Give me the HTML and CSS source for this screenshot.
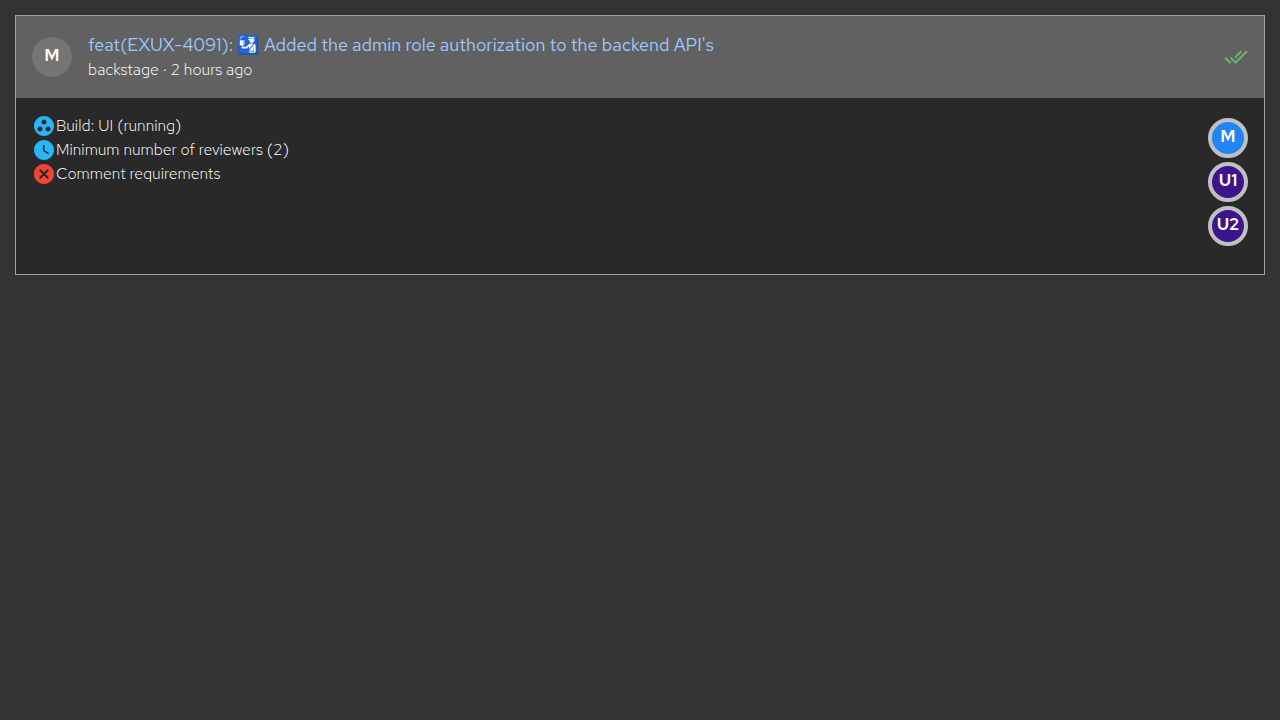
FILE: index.html
```html
<!DOCTYPE html>
<html lang="en">
<head>
<meta charset="utf-8">
<title>Pull request</title>
<link rel="stylesheet" href="styles.css">
</head>
<body>
<article class="card">
  <header class="card-header">
    <div class="avatar">M</div>
    <div class="heading">
      <h1 class="title"><a class="title-link" href="#">feat(EXUX-4091): 🛂 Added the admin role authorization to the backend API's</a></h1>
      <p class="subtitle">backstage · 2 hours ago</p>
    </div>
    <svg class="icon approved" viewBox="0 0 24 24" role="img" aria-label="Approved"><path d="M18 7l-1.410-1.410-6.340 6.340 1.410 1.410L18 7zm4.240-1.410L11.660 16.170 7.480 12l-1.410 1.410L11.660 19l12-12-1.420-1.410zM.410 13.410L6 19l1.410-1.410L1.830 12 .410 13.410z"/></svg>
  </header>
  <div class="card-body">
    <ul class="policies">
      <li class="policy"><svg class="icon info" viewBox="0 0 24 24" aria-hidden="true"><path d="M12 2C6.480 2 2 6.480 2 12s4.480 10 10 10 10-4.480 10-10S17.520 2 12 2zM8 17.500c-1.380 0-2.500-1.120-2.500-2.500s1.120-2.500 2.500-2.500 2.500 1.120 2.500 2.500-1.120 2.500-2.500 2.500zM9.500 8c0-1.380 1.120-2.500 2.500-2.500s2.500 1.120 2.500 2.500-1.120 2.500-2.500 2.500S9.500 9.380 9.500 8zm6.500 9.500c-1.380 0-2.500-1.120-2.500-2.500s1.120-2.500 2.500-2.500 2.500 1.120 2.500 2.500-1.120 2.500-2.500 2.500z"/></svg><span>Build: UI (running)</span></li>
      <li class="policy"><svg class="icon info" viewBox="0 0 24 24" aria-hidden="true"><path d="M12 2C6.500 2 2 6.500 2 12s4.500 10 10 10 10-4.500 10-10S17.500 2 12 2zm4.200 14.200L11 13V7h1.500v5.200l4.500 2.700-.8 1.300z"/></svg><span>Minimum number of reviewers (2)</span></li>
      <li class="policy"><svg class="icon error" viewBox="0 0 24 24" aria-hidden="true"><path d="M12 2C6.470 2 2 6.470 2 12s4.470 10 10 10 10-4.470 10-10S17.530 2 12 2zm5 13.590L15.590 17 12 13.410 8.410 17 7 15.590 10.590 12 7 8.410 8.410 7 12 10.590 15.590 7 17 8.410 13.410 12 17 15.590z"/></svg><span>Comment requirements</span></li>
    </ul>
    <ul class="reviewers">
      <li class="avatar reviewer blue">M</li>
      <li class="avatar reviewer purple">U1</li>
      <li class="avatar reviewer purple">U2</li>
    </ul>
  </div>
</article>
</body>
</html>
```
FILE: styles.css
```css
* { box-sizing: border-box; }
body {
  margin: 0;
  padding: 15px;
  background: #333;
  color: #fff;
  font: 300 16px/24px "Red Hat Text", Lato, "Noto Color Emoji", sans-serif;
}
h1, p, ul { margin: 0; padding: 0; }
ul { list-style: none; }
.card { border: 1px solid #a0a0a0; background: #292929; }
.card-header {
  display: flex;
  align-items: center;
  gap: 16px;
  padding: 16px;
  background: #616161;
}
.avatar {
  display: flex;
  align-items: center;
  justify-content: center;
  flex: none;
  width: 40px;
  height: 40px;
  padding-bottom: 4px;
  border-radius: 50%;
  background: #757575;
  font-size: 17px;
  line-height: 20px;
  font-weight: 600;
}
.heading { flex: 1; min-width: 0; }
.title { font-size: 18px; line-height: 26px; font-weight: 400; }
.title-link { color: #9cc9ff; text-decoration: none; }
.icon { width: 24px; height: 24px; flex: none; fill: currentColor; }
.approved { color: #66bb6a; }
.info { color: #29b6f6; }
.error { color: #f44336; }
.card-body {
  display: flex;
  justify-content: space-between;
  padding: 16px 16px 24px;
}
.policy { display: flex; align-items: center; }
.reviewers {
  display: flex;
  flex-direction: column;
  gap: 4px;
  padding: 4px 0;
}
.reviewer { border: 4px solid #c0c0c0; }
.blue { background: #2185f5; }
.purple { background: #3c148c; }
```
